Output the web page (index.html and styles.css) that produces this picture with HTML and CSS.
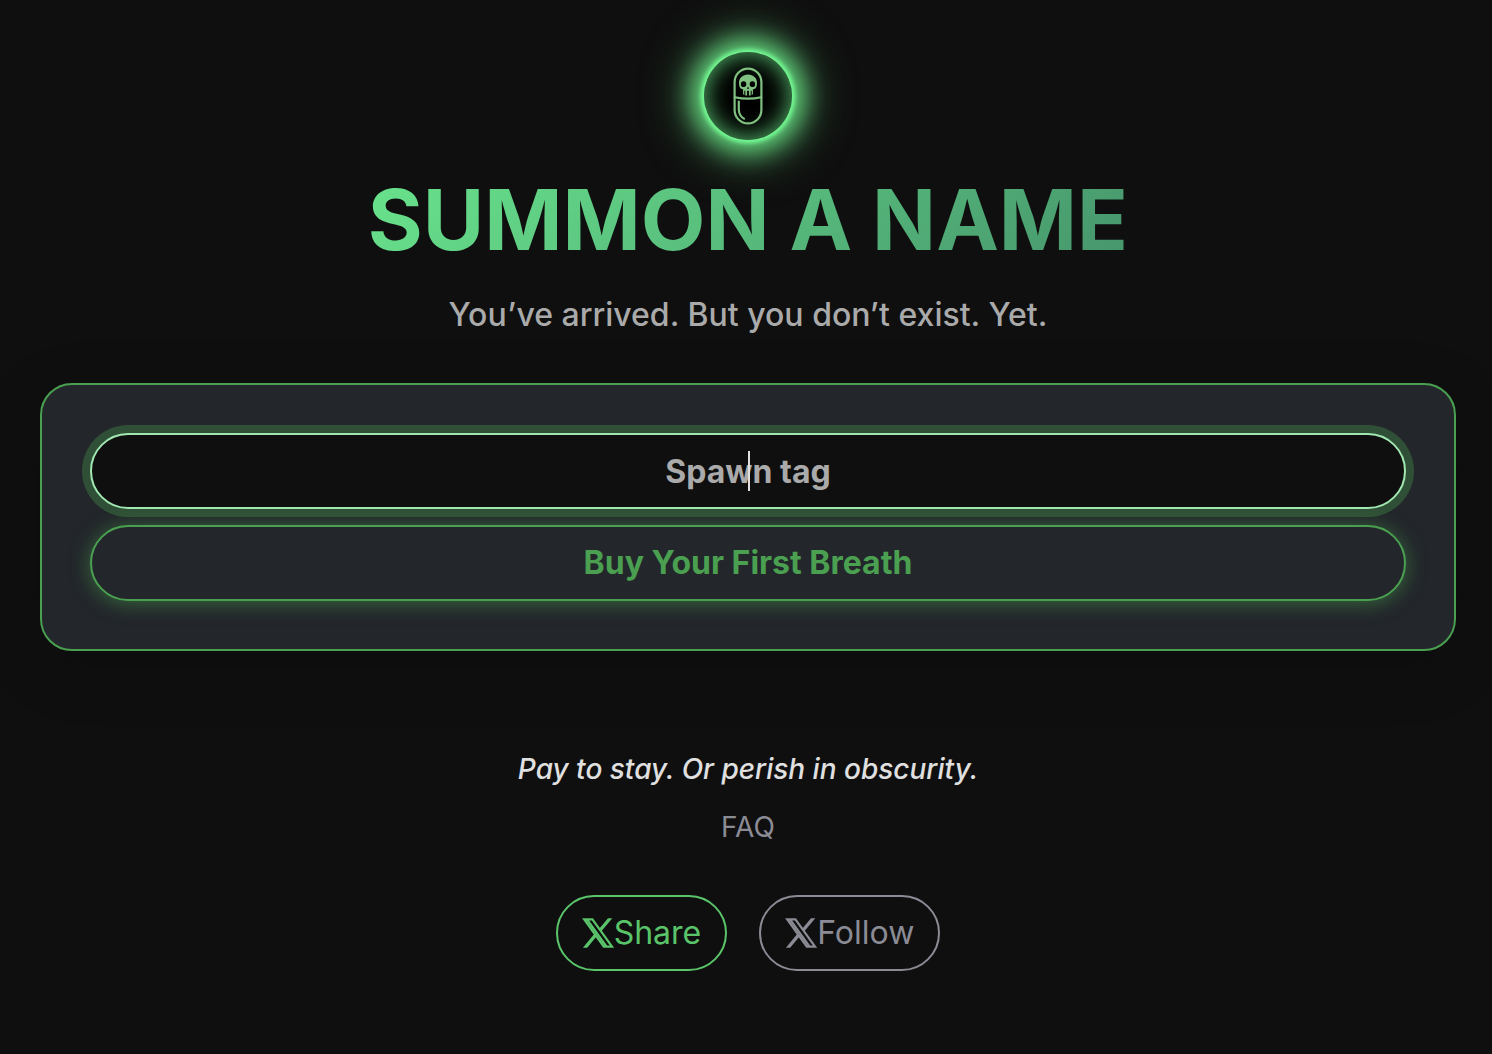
FILE: index.html
```html
<!DOCTYPE html>
<html lang="en">
<head>
<meta charset="utf-8">
<meta name="viewport" content="width=device-width, initial-scale=1">
<title>Summon a Name</title>
<link rel="stylesheet" href="styles.css">
</head>
<body>
<main class="page">
  <div class="logo">
    <svg class="logo-pill" viewBox="0 0 30 58" role="img" aria-label="Skull pill">
      <g fill="none" stroke="currentColor" stroke-width="2.200" stroke-linecap="round">
        <rect x="1.6" y="1.6" width="26.8" height="54.8" rx="13.4"/>
        <path d="M1.8 30.2 Q15 33.2 28.2 30.2"/>
        <path d="M5.8 34.5V43Q6.3 49 11 51.6"/>
      </g>
      <path fill="currentColor" fill-rule="evenodd" d="M15 7.6C20.4 7.6 24 11.200 24 15.800C24 18 23.800 19.800 22.600 21.200C21.800 22 20.300 21.800 19.900 22.800V27.200L18.700 28V23.800H17.700V28.400H15.900V23.800H14.100V28.400H12.300V23.800H11.300V28L10.100 27.200V22.800C9.700 21.800 8.200 22 7.400 21.200C6.200 19.800 6 18 6 15.800C6 11.200 9.600 7.600 15 7.600ZM10.700 14.200A2.900 2.900 0 1 0 10.800 20C12.800 20 13.500 18.500 13.300 16.700C13.100 15 12.200 14.200 10.700 14.200ZM19.300 14.200C17.800 14.200 16.900 15 16.700 16.700C16.500 18.500 17.200 20 19.200 20A2.900 2.900 0 1 0 19.300 14.200ZM15 19.600L13.900 21.800H16.100Z"/>
    </svg>
  </div>
  <h1 class="title">SUMMON A NAME</h1>
  <p class="subtitle">You’ve arrived. But you don’t exist. Yet.</p>

  <form class="card">
    <div class="field">
      <input class="pill tag-input" type="text" placeholder="Spawn tag" aria-label="Spawn tag">
      <span class="caret"></span>
    </div>
    <button class="pill buy" type="button">Buy Your First Breath</button>
  </form>

  <p class="tagline">Pay to stay. Or perish in obscurity.</p>
  <a class="faq" href="#faq">FAQ</a>

  <nav class="social" aria-label="Social">
    <a class="social-link share" href="#share">
      <svg class="x-icon" viewBox="0 0 32 30" aria-hidden="true"><path fill="none" stroke="currentColor" stroke-width="2.200" d="M2.200 1.300H10.400L30 28.700H21.800Z M5 1.300L24.600 28.700"/><path fill="currentColor" d="M26 .2H30.300L19.400 13.200L17.400 10.500Z M12.400 15.800L14.500 18.600L5.200 29.800H.9Z"/></svg>
      <span>Share</span>
    </a>
    <a class="social-link follow" href="#follow">
      <svg class="x-icon" viewBox="0 0 32 30" aria-hidden="true"><path fill="none" stroke="currentColor" stroke-width="2.200" d="M2.200 1.300H10.400L30 28.700H21.800Z M5 1.300L24.600 28.700"/><path fill="currentColor" d="M26 .2H30.300L19.400 13.200L17.400 10.500Z M12.400 15.800L14.500 18.600L5.200 29.800H.9Z"/></svg>
      <span>Follow</span>
    </a>
  </nav>
</main>
</body>
</html>
```
FILE: styles.css
```css
* {
  box-sizing: border-box;
}

body {
  margin: 0;
  min-height: 100vh;
  background: #0f0f0f;
  color: #e0e0e0;
  font-family: Inter, "Liberation Sans", sans-serif;
  font-size: 32px;
  line-height: 40px;
}

.page {
  display: flex;
  flex-direction: column;
  align-items: center;
  padding: 52px 36px 80px 40px;
}

.logo {
  display: flex;
  align-items: center;
  justify-content: center;
  width: 88px;
  height: 88px;
  border-radius: 50%;
  background: #000;
  color: #80c080;
  box-shadow:
    0 0 4px 3px #75fb94,
    0 0 24px 12px #75fb94c0,
    0 0 48px 14px #75fb9480,
    inset 0 0 24px #75fb94c0;
}

.logo-pill {
  width: 30px;
  height: 58px;
}

.title {
  margin: 32px 0 0;
  background: linear-gradient(135deg, #69e38c, #46956c);
  background-clip: text;
  -webkit-background-clip: text;
  color: transparent;
  font-size: 84px;
  font-weight: 700;
  line-height: 96px;
}

.subtitle {
  margin: 27px 0 48px;
  color: #aaa;
  font-weight: 500;
}

.card {
  display: flex;
  flex-direction: column;
  gap: 16px;
  align-self: stretch;
  padding: 48px;
  border: 2px solid #4a9f50;
  border-radius: 32px;
  background: #23262b;
  box-shadow: 0 16px 64px #00000026;
}

.field {
  position: relative;
  display: flex;
}

.pill {
  width: 100%;
  height: 76px;
  padding: 0 32px;
  border: 2px solid #4a9f50;
  border-radius: 38px;
  font: inherit;
  font-weight: 700;
  text-align: center;
}

.tag-input {
  border-color: #a0e6b0;
  outline: none;
  background: #0f0f0f;
  color: #e0e0e0;
  box-shadow: 0 0 0 8px #4caf504d;
}

.tag-input::placeholder {
  color: #aaa;
  opacity: 1;
}

.caret {
  position: absolute;
  top: 18px;
  left: 50%;
  width: 2px;
  height: 40px;
  background: #e0e0e0;
}

.buy {
  background: #23262b;
  color: #4a9f50;
  box-shadow: 0 2px 20px #4caf5080;
}

.tagline {
  margin: 98px 0 0;
  font-size: 28px;
  font-style: italic;
  font-weight: 500;
}

.faq {
  margin-top: 18px;
  color: #8b8b95;
  font-size: 28px;
  text-decoration: none;
}

.social {
  display: flex;
  gap: 32px;
  margin-top: 48px;
}

.social-link {
  display: flex;
  align-items: center;
  height: 76px;
  padding: 0 24px;
  border: 2px solid;
  border-radius: 38px;
  text-decoration: none;
}

.share {
  color: #5ac46a;
}

.follow {
  color: #8b8b95;
}

.x-icon {
  width: 32px;
  height: 30px;
}
```
